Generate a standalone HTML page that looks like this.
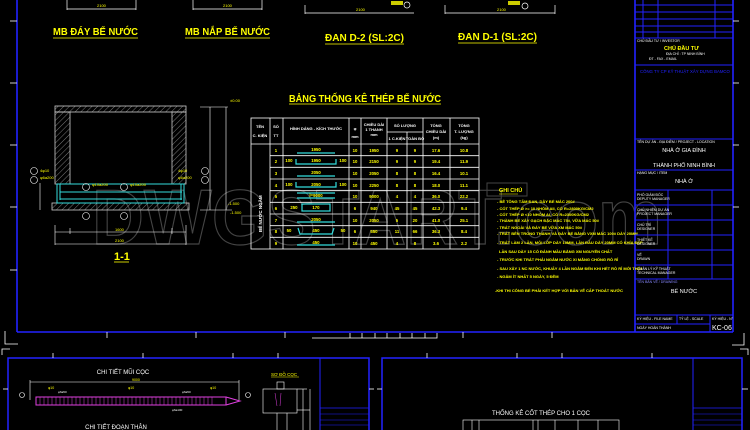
<!DOCTYPE html>
<html><head><meta charset="utf-8"><style>
html,body{margin:0;padding:0;background:#000;width:750px;height:430px;overflow:hidden}
svg{display:block}
text{font-family:"Liberation Sans",sans-serif}
</style></head><body>
<svg width="750" height="430" viewBox="0 0 750 430" xmlns="http://www.w3.org/2000/svg">
<rect width="750" height="430" fill="#000"/>
<!-- watermark -->
<text x="92" y="244" font-size="78" font-weight="bold" fill="none" stroke="#444" stroke-width="1.2" textLength="570" lengthAdjust="spacingAndGlyphs">DWGSTART.com</text>

<!-- top sheet border -->
<g stroke="#2222ff" stroke-width="1.6" fill="none">
<line x1="17" y1="0" x2="17" y2="332"/>
<line x1="17" y1="332" x2="733" y2="332"/>
<line x1="733" y1="0" x2="733" y2="332"/>
<line x1="635" y1="0" x2="635" y2="332"/>
</g>
<g stroke="#fff" stroke-width="0.8">
<line x1="10" y1="21" x2="17" y2="21"/><line x1="10" y1="83" x2="17" y2="83"/><line x1="10" y1="145" x2="17" y2="145"/><line x1="10" y1="207" x2="17" y2="207"/><line x1="10" y1="270" x2="17" y2="270"/>
<line x1="733" y1="21" x2="739" y2="21"/><line x1="733" y1="83" x2="739" y2="83"/><line x1="733" y1="145" x2="739" y2="145"/><line x1="733" y1="207" x2="739" y2="207"/>
<line x1="107" y1="332" x2="107" y2="338"/><line x1="196" y1="332" x2="196" y2="338"/><line x1="285" y1="332" x2="285" y2="338"/><line x1="463" y1="332" x2="463" y2="338"/><line x1="552" y1="332" x2="552" y2="338"/>
<polyline points="5,331 5,344 18,344" fill="none"/>
<polyline points="744,333 744,345 732,345" fill="none"/>
<polyline points="2,355 2,349 10,349" fill="none"/>
<polyline points="748,355 748,349 740,349" fill="none"/>
<polyline points="312,338 312,338 437,338 437,333" fill="none"/>
<line x1="350" y1="333" x2="350" y2="338"/><line x1="362" y1="333" x2="362" y2="338"/><line x1="375" y1="333" x2="375" y2="338"/><line x1="387" y1="333" x2="387" y2="338"/><line x1="400" y1="333" x2="400" y2="338"/><line x1="412" y1="333" x2="412" y2="338"/><line x1="425" y1="333" x2="425" y2="338"/>
</g>
<!-- top dims -->
<g stroke="#fff" stroke-width="0.7" fill="none">
<line x1="67" y1="9" x2="136" y2="9"/><line x1="67" y1="0" x2="67" y2="10"/><line x1="136" y1="0" x2="136" y2="10"/>
<line x1="193" y1="9" x2="262" y2="9"/><line x1="193" y1="0" x2="193" y2="10"/><line x1="262" y1="0" x2="262" y2="10"/>
<line x1="305" y1="13" x2="414" y2="13"/><line x1="305" y1="5" x2="305" y2="14"/>
<line x1="445" y1="13" x2="555" y2="13"/><line x1="445" y1="5" x2="445" y2="14"/><line x1="555" y1="5" x2="555" y2="14"/>
<circle cx="525" cy="6" r="3"/><circle cx="407" cy="5" r="3"/>
</g>
<g fill="#ff0" font-size="4"><text x="97" y="7">2100</text><text x="223" y="7">2100</text><text x="356" y="11">2100</text><text x="497" y="11">2100</text></g>
<rect x="508" y="1" width="12" height="4" fill="#cc0"/><rect x="391" y="1" width="12" height="4" fill="#cc0"/>

<!-- titles -->
<g fill="#ff0" font-weight="bold" font-size="10">
<text x="53" y="35" textLength="85" lengthAdjust="spacingAndGlyphs">MB ĐÁY BỂ NƯỚC</text>
<text x="185" y="35" textLength="85" lengthAdjust="spacingAndGlyphs">MB NẮP BỂ NƯỚC</text>
<text x="325" y="41" textLength="79" lengthAdjust="spacingAndGlyphs">ĐAN D-2 (SL:2C)</text>
<text x="458" y="40" textLength="79" lengthAdjust="spacingAndGlyphs">ĐAN D-1 (SL:2C)</text>
<text x="289" y="102" textLength="152" lengthAdjust="spacingAndGlyphs">BẢNG THỐNG KÊ THÉP BỂ NƯỚC</text>
<text x="114" y="260" font-size="11">1-1</text>
</g>
<g stroke="#ff0" stroke-width="0.8">
<line x1="53" y1="38" x2="138" y2="38"/><line x1="185" y1="38" x2="270" y2="38"/><line x1="325" y1="44" x2="404" y2="44"/><line x1="458" y1="43" x2="537" y2="43"/><line x1="289" y1="104" x2="441" y2="104"/><line x1="114" y1="262" x2="129" y2="262"/>
</g>

<!-- section 1-1 -->
<defs><pattern id="h" width="4" height="4" patternUnits="userSpaceOnUse" patternTransform="rotate(45)"><line x1="0" y1="0" x2="0" y2="4" stroke="#999" stroke-width="0.8"/></pattern></defs>
<g stroke="#ccc" stroke-width="0.8">
<rect x="55" y="106" width="131" height="6" fill="url(#h)"/>
<rect x="55" y="112" width="15" height="72" fill="url(#h)"/>
<rect x="172" y="112" width="14" height="72" fill="url(#h)"/>
<rect x="52" y="203" width="137" height="7" fill="url(#h)"/>
</g>
<g stroke="#3dd" stroke-width="1" fill="none">
<rect x="57" y="184" width="127" height="19"/>
<line x1="60" y1="192" x2="182" y2="192"/><line x1="60" y1="199" x2="182" y2="199"/>
<line x1="60" y1="184" x2="60" y2="200"/><line x1="181" y1="184" x2="181" y2="200"/>
</g>
<g stroke="#fff" stroke-width="0.6" fill="none">
<line x1="200" y1="107" x2="228" y2="107"/><line x1="226" y1="107" x2="226" y2="210"/><line x1="210" y1="107" x2="210" y2="210"/>
<line x1="200" y1="210" x2="232" y2="210"/>
<line x1="55" y1="232" x2="186" y2="232"/><line x1="55" y1="244" x2="186" y2="244"/>
<line x1="55" y1="225" x2="55" y2="245"/><line x1="186" y1="225" x2="186" y2="245"/>
<line x1="70" y1="228" x2="70" y2="234"/><line x1="172" y1="228" x2="172" y2="234"/>
<line x1="40" y1="183" x2="40" y2="210"/>
<circle cx="34" cy="171" r="3.5"/><circle cx="34" cy="180" r="3.5"/>
<circle cx="205" cy="171" r="3.5"/><circle cx="205" cy="180" r="3.5"/>
<circle cx="86" cy="187" r="3.5"/><circle cx="124" cy="187" r="3.5"/>
<circle cx="86" cy="216" r="3.5"/><circle cx="124" cy="216" r="3.5"/>
</g>
<g fill="#ff0" font-size="4">
<text x="40" y="172">4φ10</text><text x="40" y="179">φ6a200</text>
<text x="178" y="172">4φ10</text><text x="178" y="179">φ6a200</text>
<text x="92" y="186">φ10a200</text><text x="130" y="186">φ10a200</text>
<text x="230" y="102">±0.00</text><text x="228" y="205">-1.500</text>
<text x="115" y="242">2100</text><text x="115" y="231">1600</text>
<text x="230" y="214">-1.500</text>
</g>

<!-- table -->
<g stroke="#fff" stroke-width="0.8" fill="none">
<rect x="251" y="118" width="228" height="131"/>
<line x1="270" y1="118" x2="270" y2="249"/><line x1="283" y1="118" x2="283" y2="249"/><line x1="349" y1="118" x2="349" y2="249"/><line x1="361" y1="118" x2="361" y2="249"/><line x1="387" y1="118" x2="387" y2="249"/><line x1="407" y1="132" x2="407" y2="249"/><line x1="423" y1="118" x2="423" y2="249"/><line x1="450" y1="118" x2="450" y2="249"/>
<line x1="387" y1="132" x2="423" y2="132"/>
<line x1="251" y1="144" x2="479" y2="144"/>
<line x1="270" y1="155.7" x2="479" y2="155.7"/><line x1="270" y1="167.3" x2="479" y2="167.3"/><line x1="270" y1="179" x2="479" y2="179"/><line x1="270" y1="190.7" x2="479" y2="190.7"/><line x1="270" y1="202.3" x2="479" y2="202.3"/><line x1="270" y1="214" x2="479" y2="214"/><line x1="270" y1="225.7" x2="479" y2="225.7"/><line x1="270" y1="237.3" x2="479" y2="237.3"/>
</g>
<g stroke="#3dd" stroke-width="1.2" fill="none">
<line x1="297" y1="153" x2="335" y2="153"/>
<polyline points="296,159 296,164 336,164 336,159"/>
<line x1="297" y1="176" x2="335" y2="176"/>
<polyline points="296,182 296,187 336,187 336,182"/>
<line x1="297" y1="198" x2="335" y2="198"/><line x1="297" y1="193" x2="335" y2="193"/>
<rect x="302" y="204" width="28" height="7"/>
<line x1="297" y1="222" x2="335" y2="222"/>
<polyline points="298,228 300,234 332,234 334,228"/>
<line x1="297" y1="245" x2="335" y2="245"/>
</g>
<g fill="#fff" font-size="4" text-anchor="middle" font-weight="bold">
<text x="260" y="128">TÊN</text><text x="260" y="137">C. KIỆN</text><text x="276" y="128">SỐ</text><text x="276" y="137">TT</text>
<text x="316" y="130">HÌNH DÁNG - KÍCH THƯỚC</text><text x="355" y="130">φ</text><text x="355" y="138">mm</text>
<text x="374" y="126">CHIỀU DÀI</text><text x="374" y="131">1 THANH</text><text x="374" y="136">mm</text>
<text x="405" y="127">SỐ LƯỢNG</text><text x="397" y="140">1 C.KIỆN</text><text x="415" y="140">TOÀN BỘ</text>
<text x="436" y="127">TỔNG</text><text x="436" y="133">CHIỀU DÀI</text><text x="436" y="139">(m)</text>
<text x="464" y="127">TỔNG</text><text x="464" y="133">T. LƯỢNG</text><text x="464" y="139">(kg)</text>
</g>
<text x="262" y="232" fill="#fff" font-size="4.5" font-weight="bold" transform="rotate(-90 262 232)">BỂ NƯỚC NGẦM</text>
<g fill="#ff0" font-size="4.3" text-anchor="middle" font-weight="bold">
<text x="276" y="152">1</text><text x="276" y="163">2</text><text x="276" y="175">3</text><text x="276" y="187">4</text><text x="276" y="198">5</text><text x="276" y="210">6</text><text x="276" y="222">7</text><text x="276" y="233">8</text><text x="276" y="245">9</text>
<text x="316" y="151">1950</text><text x="316" y="162">1950</text><text x="316" y="174">2050</text><text x="316" y="186">2050</text><text x="316" y="197">l=9000</text><text x="316" y="209">170</text><text x="316" y="221">2050</text><text x="316" y="232">450</text><text x="316" y="244">450</text>
<text x="289" y="162">100</text><text x="343" y="162">100</text><text x="289" y="186">100</text><text x="343" y="186">100</text><text x="294" y="209">250</text><text x="289" y="232">50</text><text x="343" y="232">50</text>
<text x="355" y="152">10</text><text x="355" y="163">10</text><text x="355" y="175">10</text><text x="355" y="187">10</text><text x="355" y="198">10</text><text x="355" y="210">6</text><text x="355" y="222">10</text><text x="355" y="233">6</text><text x="355" y="245">10</text>
<text x="374" y="152">1950</text><text x="374" y="163">2150</text><text x="374" y="175">2050</text><text x="374" y="187">2250</text><text x="374" y="198">9000</text><text x="374" y="210">940</text><text x="374" y="222">2050</text><text x="374" y="233">550</text><text x="374" y="245">450</text>
<text x="397" y="152">9</text><text x="397" y="163">9</text><text x="397" y="175">8</text><text x="397" y="187">8</text><text x="397" y="198">4</text><text x="397" y="210">45</text><text x="397" y="222">5</text><text x="397" y="233">11</text><text x="397" y="245">4</text>
<text x="415" y="152">9</text><text x="415" y="163">9</text><text x="415" y="175">8</text><text x="415" y="187">8</text><text x="415" y="198">4</text><text x="415" y="210">45</text><text x="415" y="222">20</text><text x="415" y="233">66</text><text x="415" y="245">8</text>
<text x="436" y="152">17.6</text><text x="436" y="163">19.4</text><text x="436" y="175">16.4</text><text x="436" y="187">18.0</text><text x="436" y="198">36.0</text><text x="436" y="210">42.3</text><text x="436" y="222">41.0</text><text x="436" y="233">36.3</text><text x="436" y="245">3.6</text>
<text x="464" y="152">10.8</text><text x="464" y="163">11.9</text><text x="464" y="175">10.1</text><text x="464" y="187">11.1</text><text x="464" y="198">22.2</text><text x="464" y="210">9.4</text><text x="464" y="222">25.1</text><text x="464" y="233">8.4</text><text x="464" y="245">2.2</text>
</g>

<!-- notes -->
<rect x="487" y="183" width="40" height="13" fill="none" stroke="#444" stroke-width="1"/>
<text x="499" y="192" fill="#ff0" font-size="5.5" font-weight="bold">GHI CHÚ</text>
<line x1="499" y1="194" x2="518" y2="194" stroke="#ff0" stroke-width="0.5"/>
<g fill="#ff0" font-size="4" font-weight="bold">
<text x="497" y="203">- BÊ TÔNG TẤM ĐAN, DÂY BỂ MÁC 200#</text>
<text x="497" y="210">- CỐT THÉP Ø &gt;= 10 NHÓM AII, CÓ R=2800KG/CM2</text>
<text x="497" y="216">- CỐT THÉP Ø &lt;10 NHÓM AI, CÓ R=2300KG/CM2</text>
<text x="497" y="222">- THÀNH BỂ XÂY GẠCH ĐẶC MÁC 75#, VỮA MÁC 50#</text>
<text x="497" y="229">- TRÁT NGOÀI VÀ ĐÁY BỂ VỮA XM MÁC 50#</text>
<text x="497" y="235">- TRÁT BÊN TRONG THÀNH VÀ ĐÁY BỂ BẰNG VXM MÁC 100# DÀY 20MM</text>
<text x="497" y="244">- TRÁT LÀM 2 LẦN, MỖI LỚP DÀY 10MM, LẦN ĐẦU DÀY 20MM CÓ KHÍA ĐẸP</text>
<text x="499" y="253">LẦN SAU DÀY 15 CÓ ĐÁNH MẦU BẰNG XM NGUYÊN CHẤT</text>
<text x="497" y="261">- TRƯỚC KHI TRÁT PHẢI NGÂM NƯỚC XI MĂNG CHỐNG RÒ RỈ</text>
<text x="497" y="270">- SAU XÂY 1 NC NƯỚC, KHUẤY 4 LẦN NGÂM ĐẾN KHI HẾT RÒ RỈ MỚI THÔI</text>
<text x="497" y="278">- NGÂM ÍT NHẤT 5 NGÀY, 5 ĐÊM</text>
<text x="495" y="292">-KHI THI CÔNG BỂ PHẢI KẾT HỢP VỚI BẢN VẼ CẤP THOÁT NƯỚC</text>
</g>

<!-- title block top -->
<g stroke="#2222ff" stroke-width="1" fill="none">
<line x1="635" y1="5" x2="733" y2="5"/><line x1="635" y1="12" x2="733" y2="12"/><line x1="635" y1="19" x2="733" y2="19"/><line x1="635" y1="26" x2="733" y2="26"/><line x1="635" y1="32" x2="733" y2="32"/>
<line x1="643" y1="0" x2="643" y2="38"/><line x1="658" y1="0" x2="658" y2="38"/><line x1="715" y1="0" x2="715" y2="38"/>
<line x1="635" y1="38" x2="733" y2="38"/><line x1="635" y1="65" x2="733" y2="65"/><line x1="635" y1="139" x2="733" y2="139"/><line x1="635" y1="170" x2="733" y2="170"/><line x1="635" y1="190" x2="733" y2="190"/>
<line x1="635" y1="205" x2="733" y2="205"/><line x1="635" y1="220" x2="733" y2="220"/><line x1="635" y1="235" x2="733" y2="235"/><line x1="635" y1="250" x2="733" y2="250"/><line x1="635" y1="265" x2="733" y2="265"/><line x1="635" y1="279" x2="733" y2="279"/>
<line x1="668" y1="190" x2="668" y2="279"/><line x1="712" y1="190" x2="712" y2="279"/>
<line x1="635" y1="315" x2="733" y2="315"/><line x1="635" y1="324" x2="710" y2="324"/>
<line x1="677" y1="315" x2="677" y2="324"/><line x1="710" y1="315" x2="710" y2="332"/>
</g>
<g fill="#fff" font-size="3.5">
<text x="637" y="42">CHỦ ĐẦU TƯ / INVESTOR</text>
<text x="637" y="143">TÊN DỰ ÁN - ĐỊA ĐIỂM / PROJECT - LOCATION</text>
<text x="637" y="174">HẠNG MỤC / ITEM</text>
<text x="637" y="196">PHÓ GIÁM ĐỐC</text><text x="637" y="200">DEPUTY MANAGER</text>
<text x="637" y="211">CHỦ NHIỆM DỰ ÁN</text><text x="637" y="215">PROJECT MANAGER</text>
<text x="637" y="226">CHỦ TRÌ</text><text x="637" y="230">DESIGNER</text>
<text x="637" y="241">THIẾT KẾ</text><text x="637" y="245">DESIGNER</text>
<text x="637" y="256">VẼ</text><text x="637" y="260">DRAWN</text>
<text x="637" y="270">QUẢN LÝ KỸ THUẬT</text><text x="637" y="274">TECHNICAL MANAGER</text>
<text x="637" y="283" fill="#88f">TÊN BẢN VẼ / DRAWING</text>
<text x="637" y="320">KÝ HIỆU - FILE NAME</text><text x="679" y="320">TỶ LỆ - SCALE</text><text x="712" y="320">KÝ HIỆU - N°</text>
<text x="637" y="329">NGÀY HOÀN THÀNH</text>
<text x="666" y="55">ĐỊA CHỈ : TP NINH BÌNH</text><text x="649" y="60">ĐT - FAX - EMAIL</text>
</g>
<text x="664" y="50" fill="#ff0" font-size="5.5" font-weight="bold">CHỦ ĐẦU TƯ</text>
<text x="640" y="73" fill="#22f" font-size="4.3">CÔNG TY CP KỸ THUẬT XÂY DỰNG BAMCO</text>
<g fill="#fff" font-size="5.5" text-anchor="middle">
<text x="684" y="152">NHÀ Ở GIA ĐÌNH</text>
<text x="684" y="167">THÀNH PHỐ NINH BÌNH</text>
<text x="684" y="183">NHÀ Ở</text>
<text x="684" y="293">BỂ NƯỚC</text>
</g>
<text x="712" y="330" fill="#fff" font-size="7">KC-06</text>

<!-- bottom sheets -->
<g stroke="#2222ff" stroke-width="1.5" fill="none">
<polyline points="8,430 8,358 369,358 369,430"/>
<polyline points="382,430 382,358 742,358 742,430"/>
<line x1="320" y1="358" x2="320" y2="430" stroke-width="1"/>
<line x1="693" y1="358" x2="693" y2="430" stroke-width="1"/>
<line x1="320" y1="408" x2="369" y2="408" stroke-width="0.8"/>
<line x1="693" y1="408" x2="742" y2="408" stroke-width="0.8"/>
<line x1="320" y1="414" x2="369" y2="414" stroke-width="0.6"/><line x1="320" y1="420" x2="369" y2="420" stroke-width="0.6"/><line x1="320" y1="425" x2="369" y2="425" stroke-width="0.6"/>
<line x1="693" y1="414" x2="742" y2="414" stroke-width="0.6"/><line x1="693" y1="420" x2="742" y2="420" stroke-width="0.6"/><line x1="693" y1="425" x2="742" y2="425" stroke-width="0.6"/>
</g>
<g stroke="#fff" stroke-width="0.8">
<line x1="53" y1="353" x2="53" y2="358"/><line x1="143" y1="353" x2="143" y2="358"/><line x1="233" y1="353" x2="233" y2="358"/><line x1="278" y1="353" x2="278" y2="358"/>
<line x1="427" y1="353" x2="427" y2="358"/><line x1="517" y1="353" x2="517" y2="358"/><line x1="562" y1="353" x2="562" y2="358"/><line x1="652" y1="353" x2="652" y2="358"/>
<line x1="3" y1="389" x2="8" y2="389"/><line x1="742" y1="389" x2="748" y2="389"/><line x1="369" y1="389" x2="374" y2="389"/><line x1="377" y1="389" x2="382" y2="389"/>
</g>
<g fill="#fff" font-size="6" text-anchor="middle">
<text x="123" y="374">CHI TIẾT MŨI CỌC</text>
<text x="116" y="429">CHI TIẾT ĐOẠN THÂN</text>
<text x="541" y="415">THỐNG KÊ CỐT THÉP CHO 1 CỌC</text>
</g>
<text x="271" y="376" fill="#ff0" font-size="4.5">SƠ ĐỒ CỌC</text>
<line x1="271" y1="377" x2="299" y2="377" stroke="#ff0" stroke-width="0.5"/>
<g stroke="#fff" stroke-width="0.6" fill="none">
<line x1="30" y1="382" x2="239" y2="382"/><line x1="30" y1="380" x2="30" y2="400"/><line x1="239" y1="380" x2="239" y2="400"/>
<circle cx="22" cy="395" r="2.5"/><circle cx="248" cy="395" r="2.5"/>
<rect x="263" y="389" width="34" height="24"/><rect x="277" y="382" width="7" height="7"/>
<line x1="277" y1="413" x2="277" y2="430"/><line x1="287" y1="413" x2="287" y2="430"/>
<line x1="303" y1="389" x2="303" y2="430"/><line x1="310" y1="389" x2="310" y2="430"/>
<line x1="297" y1="389" x2="307" y2="389"/><line x1="297" y1="410" x2="310" y2="410"/>
</g>
<g stroke="#e040e0" stroke-width="1" fill="none">
<rect x="36" y="397" width="190" height="8"/>
<path d="M226 397 L240 401 L226 405"/>
</g>
<g stroke="#e040e0" stroke-width="0.5">
<path d="M40 397v8M44 397v8M48 397v8M52 397v8M56 397v8M60 397v8M64 397v8M68 397v8M72 397v8M76 397v8M80 397v8M84 397v8M88 397v8M92 397v8M96 397v8M100 397v8M104 397v8M108 397v8M112 397v8M116 397v8M120 397v8M124 397v8M128 397v8M132 397v8M136 397v8M140 397v8M144 397v8M148 397v8M152 397v8M156 397v8M160 397v8M164 397v8M168 397v8M172 397v8M176 397v8M180 397v8M184 397v8M188 397v8M192 397v8M196 397v8M200 397v8M204 397v8M208 397v8M212 397v8"/>
<path d="M275 393 l2 13 M281 393 l-1 13"/>
</g>
<g fill="#ff0" font-size="3.5"><text x="132" y="381">9000</text><text x="48" y="389">φ10</text><text x="210" y="389">φ10</text><text x="128" y="389">φ10</text></g>
<g fill="#fff" font-size="3"><text x="58" y="393">φ6a50</text><text x="182" y="393">φ6a50</text><text x="172" y="411">φ6a100</text><text x="170" y="409"></text></g>
<!-- bottom table -->
<g stroke="#fff" stroke-width="0.6" fill="none">
<rect x="463" y="420" width="156" height="12"/>
<line x1="472" y1="420" x2="472" y2="430"/><line x1="479" y1="420" x2="479" y2="430"/><line x1="533" y1="420" x2="533" y2="430"/><line x1="538" y1="420" x2="538" y2="430"/><line x1="555" y1="420" x2="555" y2="430"/><line x1="578" y1="420" x2="578" y2="430"/><line x1="598" y1="420" x2="598" y2="430"/>
</g>
</svg>
</body></html>
